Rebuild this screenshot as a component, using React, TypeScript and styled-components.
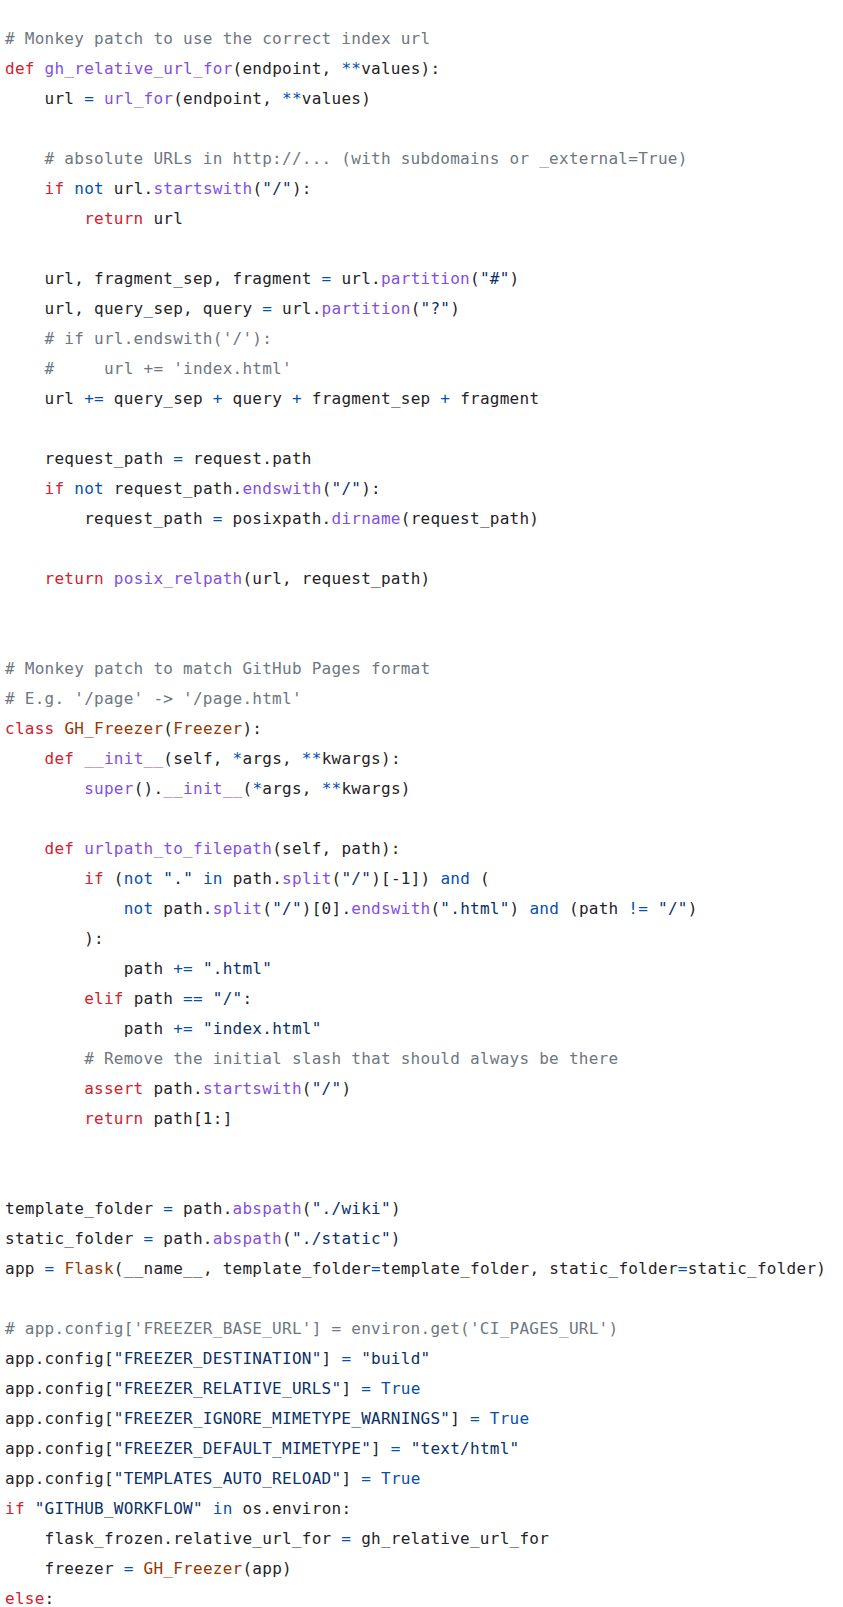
import React from "react";
import styled, { createGlobalStyle } from "styled-components";

const GlobalStyle = createGlobalStyle`
  html, body {
    margin: 0;
    padding: 0;
    background: #ffffff;
  }
`;

type Kind = "t" | "c" | "k" | "f" | "o" | "s" | "n";

const palette: Record<Kind, string> = {
  t: "#1f2328",
  c: "#6e7781",
  k: "#cf222e",
  f: "#8250df",
  o: "#0550ae",
  s: "#0a3069",
  n: "#953800",
};

const CodeBlock = styled.pre`
  margin: 0;
  padding: 24px 0 8px 5px;
  font-family: "DejaVu Sans Mono", "Liberation Mono", monospace;
  font-size: 16px;
  line-height: 30px;
  letter-spacing: 0.26px;
  color: ${palette.t};
  overflow: hidden;
`;

const Line = styled.div`
  display: block;
  height: 30px;
  white-space: pre;
`;

const Token = styled.span<{ $kind: Kind }>`
  color: ${(p) => palette[p.$kind]};
`;

const source: string[] = [
  `{c:# Monkey patch to use the correct index url}`,
  `{k:def} {f:gh_relative_url_for}(endpoint, {o:**}values):`,
  `    url {o:=} {f:url_for}(endpoint, {o:**}values)`,
  ``,
  `    {c:# absolute URLs in http://... (with subdomains or _external=True)}`,
  `    {k:if} {o:not} url.{f:startswith}({s:"/"}):`,
  `        {k:return} url`,
  ``,
  `    url, fragment_sep, fragment {o:=} url.{f:partition}({s:"#"})`,
  `    url, query_sep, query {o:=} url.{f:partition}({s:"?"})`,
  `    {c:# if url.endswith('/'):}`,
  `    {c:#     url += 'index.html'}`,
  `    url {o:+=} query_sep {o:+} query {o:+} fragment_sep {o:+} fragment`,
  ``,
  `    request_path {o:=} request.path`,
  `    {k:if} {o:not} request_path.{f:endswith}({s:"/"}):`,
  `        request_path {o:=} posixpath.{f:dirname}(request_path)`,
  ``,
  `    {k:return} {f:posix_relpath}(url, request_path)`,
  ``,
  ``,
  `{c:# Monkey patch to match GitHub Pages format}`,
  `{c:# E.g. '/page' -> '/page.html'}`,
  `{k:class} {n:GH_Freezer}({n:Freezer}):`,
  `    {k:def} {f:__init__}(self, {o:*}args, {o:**}kwargs):`,
  `        {f:super}().{f:__init__}({o:*}args, {o:**}kwargs)`,
  ``,
  `    {k:def} {f:urlpath_to_filepath}(self, path):`,
  `        {k:if} ({o:not} {s:"."} {o:in} path.{f:split}({s:"/"})[-1]) {o:and} (`,
  `            {o:not} path.{f:split}({s:"/"})[0].{f:endswith}({s:".html"}) {o:and} (path {o:!=} {s:"/"})`,
  `        ):`,
  `            path {o:+=} {s:".html"}`,
  `        {k:elif} path {o:==} {s:"/"}:`,
  `            path {o:+=} {s:"index.html"}`,
  `        {c:# Remove the initial slash that should always be there}`,
  `        {k:assert} path.{f:startswith}({s:"/"})`,
  `        {k:return} path[1:]`,
  ``,
  ``,
  `template_folder {o:=} path.{f:abspath}({s:"./wiki"})`,
  `static_folder {o:=} path.{f:abspath}({s:"./static"})`,
  `app {o:=} {n:Flask}(__name__, template_folder{o:=}template_folder, static_folder{o:=}static_folder)`,
  ``,
  `{c:# app.config['FREEZER_BASE_URL'] = environ.get('CI_PAGES_URL')}`,
  `app.config[{s:"FREEZER_DESTINATION"}] {o:=} {s:"build"}`,
  `app.config[{s:"FREEZER_RELATIVE_URLS"}] {o:=} {o:True}`,
  `app.config[{s:"FREEZER_IGNORE_MIMETYPE_WARNINGS"}] {o:=} {o:True}`,
  `app.config[{s:"FREEZER_DEFAULT_MIMETYPE"}] {o:=} {s:"text/html"}`,
  `app.config[{s:"TEMPLATES_AUTO_RELOAD"}] {o:=} {o:True}`,
  `{k:if} {s:"GITHUB_WORKFLOW"} {o:in} os.environ:`,
  `    flask_frozen.relative_url_for {o:=} gh_relative_url_for`,
  `    freezer {o:=} {n:GH_Freezer}(app)`,
  `{k:else}:`,
];

type Piece = { kind: Kind; text: string };

function tokenize(line: string): Piece[] {
  const out: Piece[] = [];
  const re = /\{(\w):([^}]*)\}/g;
  let last = 0;
  let m: RegExpExecArray | null;
  while ((m = re.exec(line)) !== null) {
    if (m.index > last) out.push({ kind: "t", text: line.slice(last, m.index) });
    out.push({ kind: m[1] as Kind, text: m[2] });
    last = m.index + m[0].length;
  }
  if (last < line.length) out.push({ kind: "t", text: line.slice(last) });
  return out;
}

export default function App() {
  return (
    <>
      <GlobalStyle />
      <CodeBlock>
        {source.map((line, i) => (
          <Line key={i}>
            {line === ""
              ? "\u00a0"
              : tokenize(line).map((p, j) => (
                  <Token key={j} $kind={p.kind}>
                    {p.text}
                  </Token>
                ))}
          </Line>
        ))}
      </CodeBlock>
    </>
  );
}
